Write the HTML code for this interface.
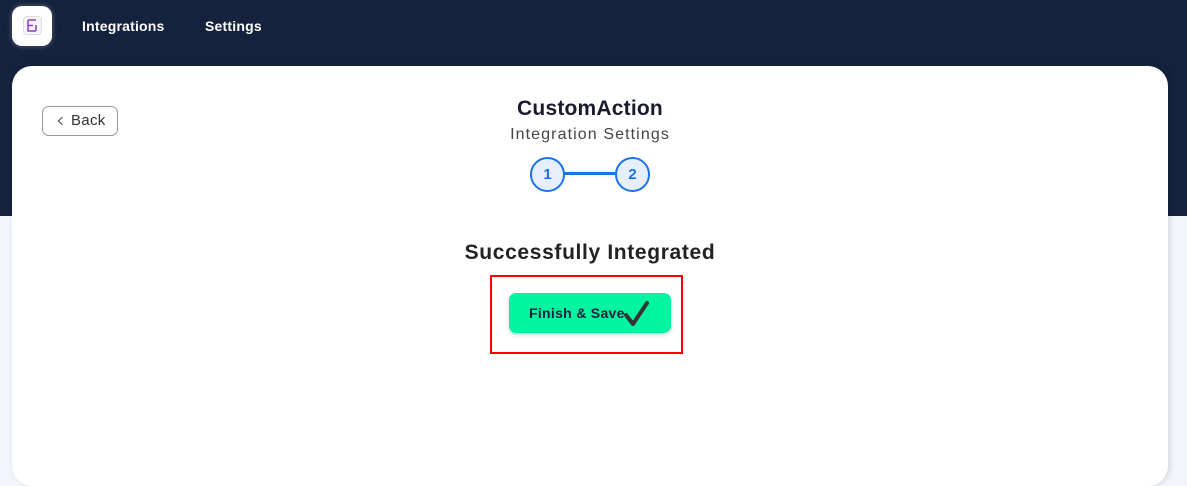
<!DOCTYPE html>
<html><head><meta charset="utf-8"><style>
*{margin:0;padding:0;box-sizing:border-box}
body{width:1187px;height:477px;overflow:hidden;background:#f3f5fd;font-family:"Liberation Sans",sans-serif;position:relative}
.top{position:absolute;left:0;top:0;width:1187px;height:216px;background:#14223d}
.logo{position:absolute;left:12px;top:6px;width:40px;height:40px;background:#fff;border-radius:10px;box-shadow:0 0 6px rgba(255,255,255,.3)}
.logo div{position:absolute;left:11px;top:10px;width:19px;height:19px;border:1px solid #ddd;border-radius:4px;background:#f7f5fb}
.nav{position:absolute;top:18px;color:#fff;font-size:14px;font-weight:bold;letter-spacing:.2px}
.card{position:absolute;left:12px;top:66px;width:1156px;height:420px;background:#fff;border-radius:20px;box-shadow:2px 0 6px rgba(0,0,0,.12)}
.back{position:absolute;left:42px;top:106px;width:76px;height:30px;border:1px solid #999;border-radius:7px;color:#333;font-size:15px;line-height:28px;padding-left:28px;letter-spacing:.3px}
.back:before{content:"";position:absolute;left:16px;top:11px;width:5px;height:5px;border-left:1.5px solid #444;border-bottom:1.5px solid #444;transform:rotate(45deg)}
.c{position:absolute;left:0;width:1180px;text-align:center}
.step{position:absolute;top:157px;width:35px;height:35px;border:2px solid #1a73e8;border-radius:50%;background:#e6effd;color:#1a73e8;font-weight:bold;font-size:15px;text-align:center;line-height:31px}
.line{position:absolute;left:564px;top:172px;width:52px;height:3px;background:#1a73e8}
.red{position:absolute;left:490px;top:275px;width:193px;height:79px;border:2px solid #f00}
.btn{position:absolute;left:509px;top:293px;width:162px;height:40px;background:#00f5a0;border-radius:7px;box-shadow:0 2px 4px rgba(0,0,0,.15);color:#1c1c3c;font-weight:bold;font-size:14px;line-height:40px;padding-left:20px;letter-spacing:.3px}
</style></head><body>
<div class="top"></div>
<div class="logo"><div><svg width="17" height="17" viewBox="0 0 17 17"><path d="M4 3h8M4 3v11h8M4 8.5h5M12 8v6" stroke="#8a3fd0" stroke-width="1.5" fill="none"/></svg></div></div>
<div class="nav" style="left:82px">Integrations</div>
<div class="nav" style="left:205px">Settings</div>
<div class="card"></div>
<div class="back">Back</div>
<div class="c" style="top:97px;font-size:21px;font-weight:bold;color:#1a1a2e;letter-spacing:.2px">CustomAction</div>
<div class="c" style="top:126px;font-size:16px;color:#444;letter-spacing:1.1px">Integration Settings</div>
<div class="line"></div>
<div class="step" style="left:530px">1</div>
<div class="step" style="left:615px">2</div>
<div class="c" style="top:241px;font-size:21px;font-weight:bold;color:#222;letter-spacing:.65px">Successfully Integrated</div>
<div class="red"></div>
<div class="btn">Finish &amp; Save<svg style="position:absolute;left:114px;top:7px" width="28" height="28" viewBox="0 0 28 28"><path d="M3 15l7 9L24 3" stroke="#333" stroke-width="4" fill="none" stroke-linecap="round" stroke-linejoin="round"/></svg></div>
</body></html>
